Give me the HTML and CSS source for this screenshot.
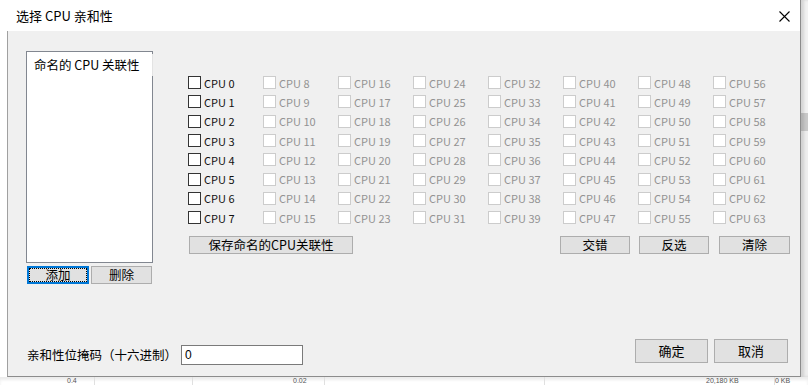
FILE: index.html
```html
<!DOCTYPE html>
<html>
<head>
  <title>选择 CPU 亲和性</title>
  <link rel="stylesheet" href="styles.css">
</head>
<body>
  <div class="screen">

    <div class="dialog">
      <div class="titlebar">
        <span class="title">选择 CPU 亲和性</span>
        <svg class="close" width="11" height="11" viewBox="0 0 11 11">
          <path d="M0.5 0.5 L10.5 10.5 M10.5 0.5 L0.5 10.5" stroke="#000" stroke-width="1.1" fill="none"/>
        </svg>
      </div>

      <div class="client">
        <div class="top">

          <div class="left">
            <div class="listbox">
              <div class="list-item">命名的 CPU 关联性</div>
            </div>
            <div class="left-buttons">
              <button class="btn btn-add focused"><span class="focus-ring">添加</span></button>
              <button class="btn btn-del">删除</button>
            </div>
          </div>

          <div class="right">
            <div class="cpu-grid">
              <label class="cpu"><span class="box"></span>CPU 0</label>
              <label class="cpu"><span class="box"></span>CPU 1</label>
              <label class="cpu"><span class="box"></span>CPU 2</label>
              <label class="cpu"><span class="box"></span>CPU 3</label>
              <label class="cpu"><span class="box"></span>CPU 4</label>
              <label class="cpu"><span class="box"></span>CPU 5</label>
              <label class="cpu"><span class="box"></span>CPU 6</label>
              <label class="cpu"><span class="box"></span>CPU 7</label>

              <label class="cpu off"><span class="box"></span>CPU 8</label>
              <label class="cpu off"><span class="box"></span>CPU 9</label>
              <label class="cpu off"><span class="box"></span>CPU 10</label>
              <label class="cpu off"><span class="box"></span>CPU 11</label>
              <label class="cpu off"><span class="box"></span>CPU 12</label>
              <label class="cpu off"><span class="box"></span>CPU 13</label>
              <label class="cpu off"><span class="box"></span>CPU 14</label>
              <label class="cpu off"><span class="box"></span>CPU 15</label>

              <label class="cpu off"><span class="box"></span>CPU 16</label>
              <label class="cpu off"><span class="box"></span>CPU 17</label>
              <label class="cpu off"><span class="box"></span>CPU 18</label>
              <label class="cpu off"><span class="box"></span>CPU 19</label>
              <label class="cpu off"><span class="box"></span>CPU 20</label>
              <label class="cpu off"><span class="box"></span>CPU 21</label>
              <label class="cpu off"><span class="box"></span>CPU 22</label>
              <label class="cpu off"><span class="box"></span>CPU 23</label>

              <label class="cpu off"><span class="box"></span>CPU 24</label>
              <label class="cpu off"><span class="box"></span>CPU 25</label>
              <label class="cpu off"><span class="box"></span>CPU 26</label>
              <label class="cpu off"><span class="box"></span>CPU 27</label>
              <label class="cpu off"><span class="box"></span>CPU 28</label>
              <label class="cpu off"><span class="box"></span>CPU 29</label>
              <label class="cpu off"><span class="box"></span>CPU 30</label>
              <label class="cpu off"><span class="box"></span>CPU 31</label>

              <label class="cpu off"><span class="box"></span>CPU 32</label>
              <label class="cpu off"><span class="box"></span>CPU 33</label>
              <label class="cpu off"><span class="box"></span>CPU 34</label>
              <label class="cpu off"><span class="box"></span>CPU 35</label>
              <label class="cpu off"><span class="box"></span>CPU 36</label>
              <label class="cpu off"><span class="box"></span>CPU 37</label>
              <label class="cpu off"><span class="box"></span>CPU 38</label>
              <label class="cpu off"><span class="box"></span>CPU 39</label>

              <label class="cpu off"><span class="box"></span>CPU 40</label>
              <label class="cpu off"><span class="box"></span>CPU 41</label>
              <label class="cpu off"><span class="box"></span>CPU 42</label>
              <label class="cpu off"><span class="box"></span>CPU 43</label>
              <label class="cpu off"><span class="box"></span>CPU 44</label>
              <label class="cpu off"><span class="box"></span>CPU 45</label>
              <label class="cpu off"><span class="box"></span>CPU 46</label>
              <label class="cpu off"><span class="box"></span>CPU 47</label>

              <label class="cpu off"><span class="box"></span>CPU 48</label>
              <label class="cpu off"><span class="box"></span>CPU 49</label>
              <label class="cpu off"><span class="box"></span>CPU 50</label>
              <label class="cpu off"><span class="box"></span>CPU 51</label>
              <label class="cpu off"><span class="box"></span>CPU 52</label>
              <label class="cpu off"><span class="box"></span>CPU 53</label>
              <label class="cpu off"><span class="box"></span>CPU 54</label>
              <label class="cpu off"><span class="box"></span>CPU 55</label>

              <label class="cpu off"><span class="box"></span>CPU 56</label>
              <label class="cpu off"><span class="box"></span>CPU 57</label>
              <label class="cpu off"><span class="box"></span>CPU 58</label>
              <label class="cpu off"><span class="box"></span>CPU 59</label>
              <label class="cpu off"><span class="box"></span>CPU 60</label>
              <label class="cpu off"><span class="box"></span>CPU 61</label>
              <label class="cpu off"><span class="box"></span>CPU 62</label>
              <label class="cpu off"><span class="box"></span>CPU 63</label>
            </div>

            <div class="grid-buttons">
              <button class="btn btn-save">保存命名的CPU关联性</button>
              <button class="btn btn-small btn-interleave">交错</button>
              <button class="btn btn-small">反选</button>
              <button class="btn btn-small btn-clear">清除</button>
            </div>
          </div>

        </div>

        <div class="footer">
          <div class="mask">
            <span class="mask-label">亲和性位掩码（十六进制）</span>
            <div class="mask-input">0</div>
          </div>
          <div class="actions">
            <button class="btn btn-big">确定</button>
            <button class="btn btn-big btn-cancel">取消</button>
          </div>
        </div>
      </div>
    </div>

    <div class="side-strip"></div>

    <div class="bottom-strip">
      <span class="cell c1">0.4</span>
      <span class="cell c2"></span>
      <span class="cell c3">0.02</span>
      <span class="cell c4"></span>
      <span class="cell c5">20,180 KB</span>
      <span class="cell c6">0 KB</span>
    </div>

  </div>
</body>
</html>
```

FILE: styles.css
```css
body
{
  margin:0;
  background-color:#ffffff;
  font-family:"Noto Sans CJK SC", "Microsoft YaHei", sans-serif;
  font-size:12px;
  color:#000000;
}

.screen
{
  width:808px;
  height:385px;
  overflow:hidden;

  display:grid;
  grid-template-columns:801px 7px;
  grid-template-rows:377px 8px;
}

.dialog
{
  border-right:1px solid #8c8c8c;
  background-color:#ffffff;

  display:flex;
  flex-direction:column;
}

.titlebar
{
  height:31px;
  padding-left:16px;
  padding-right:10px;

  display:flex;
  justify-content:space-between;
  align-items:center;
}

.title
{
  font-size:13px;
}

.close
{
  margin-top:1px;
}

.client
{
  flex:1;
  margin-left:7px;
  border-left:1px solid #a0a0a0;
  border-bottom:1px solid #8c8c8c;
  background-color:#f0f0f0;

  padding:20px 12px 11px 18px;

  display:flex;
  flex-direction:column;
}

.top
{
  display:flex;
}

.left
{
  width:127px;
  display:flex;
  flex-direction:column;
}

.listbox
{
  box-sizing:border-box;
  height:212px;
  background-color:#ffffff;
  border:1px solid #828790;
  padding:2px 0 0 1px;
}

.list-item
{
  width:118px;
  height:22px;
  padding-left:6px;
  border-right:1px solid #e3e3e3;
  line-height:22px;
  font-size:12.5px;
}

.left-buttons
{
  margin-top:3px;
  display:flex;
  gap:2px;
}

.btn
{
  box-sizing:border-box;
  height:18px;
  padding:0;
  background-color:#e1e1e1;
  border:1px solid #adadad;
  font-family:inherit;
  font-size:12.5px;
  color:#000000;
  line-height:14px;
}

.btn-add
{
  width:62px;
  margin-left:1px;
  border-color:#0078d7;
  box-shadow:inset 0 0 0 1px #0078d7;
  padding:2px;
}

.focus-ring
{
  display:block;
  height:12px;
  line-height:12px;
  outline:1px dotted #000000;
}

.btn-del
{
  width:61px;
}

.right
{
  margin-left:35px;
  padding-top:22px;
}

.cpu-grid
{
  display:grid;
  grid-template-columns:repeat(8, 75px);
  grid-template-rows:repeat(8, 19.3px);
  grid-auto-flow:column;
}

.cpu
{
  display:flex;
  align-items:center;
  gap:3px;
  font-size:11px;
  color:#111111;
}

.box
{
  box-sizing:border-box;
  width:13px;
  height:13px;
  background-color:#ffffff;
  border:1px solid #333333;
}

.cpu.off
{
  color:#939393;
}

.cpu.off .box
{
  border-color:#cccccc;
}

.grid-buttons
{
  margin-top:9px;
  display:flex;
}

.btn-save
{
  width:164px;
  margin-left:1px;
}

.btn-small
{
  width:70px;
  margin-left:9px;
}

.btn-interleave
{
  margin-left:207px;
}

.btn-clear
{
  width:71px;
  margin-left:10px;
}

.footer
{
  margin-top:auto;
  display:flex;
  align-items:flex-end;
}

.mask
{
  display:flex;
  align-items:center;
  margin-left:1px;
}

.mask-label
{
  width:154px;
  font-size:12.5px;
  padding-bottom:1px;
}

.mask-input
{
  box-sizing:border-box;
  width:122px;
  height:20px;
  padding-left:3px;
  background-color:#ffffff;
  border:1px solid #7a7a7a;
  font-family:"Liberation Sans", sans-serif;
  font-size:12px;
  line-height:18px;
}

.actions
{
  margin-left:auto;
  margin-bottom:2px;
  display:flex;
  gap:6px;
}

.btn-big
{
  width:73px;
  height:24px;
  font-size:13px;
  line-height:20px;
}

.btn-cancel
{
  width:74px;
}

.side-strip
{
  background:linear-gradient(to bottom, #f2f2f2 0, #f2f2f2 113px, #c9c9c9 113px, #c9c9c9 131px, #eeeeee 131px);
  box-shadow:inset 3px 0 3px rgba(0,0,0,0.12);
}

.bottom-strip
{
  grid-column:1 / span 2;
  background-color:#ffffff;
  box-shadow:inset 0 3px 3px rgba(0,0,0,0.08);

  display:flex;
  font-family:"Liberation Sans", sans-serif;
  font-size:7px;
  line-height:8px;
  color:#555555;
  overflow:hidden;
}

.cell
{
  box-sizing:border-box;
  height:8px;
  border-right:1px solid #e0e0e0;
}

.c1
{
  width:95px;
  padding-left:67px;
}

.c2
{
  width:98px;
}

.c3
{
  width:132px;
  padding-left:100px;
}

.c4
{
  width:220px;
}

.c5
{
  width:230px;
  padding-left:161px;
}

.c6
{
  width:33px;
  padding-left:0;
  border-right:none;
}
```
